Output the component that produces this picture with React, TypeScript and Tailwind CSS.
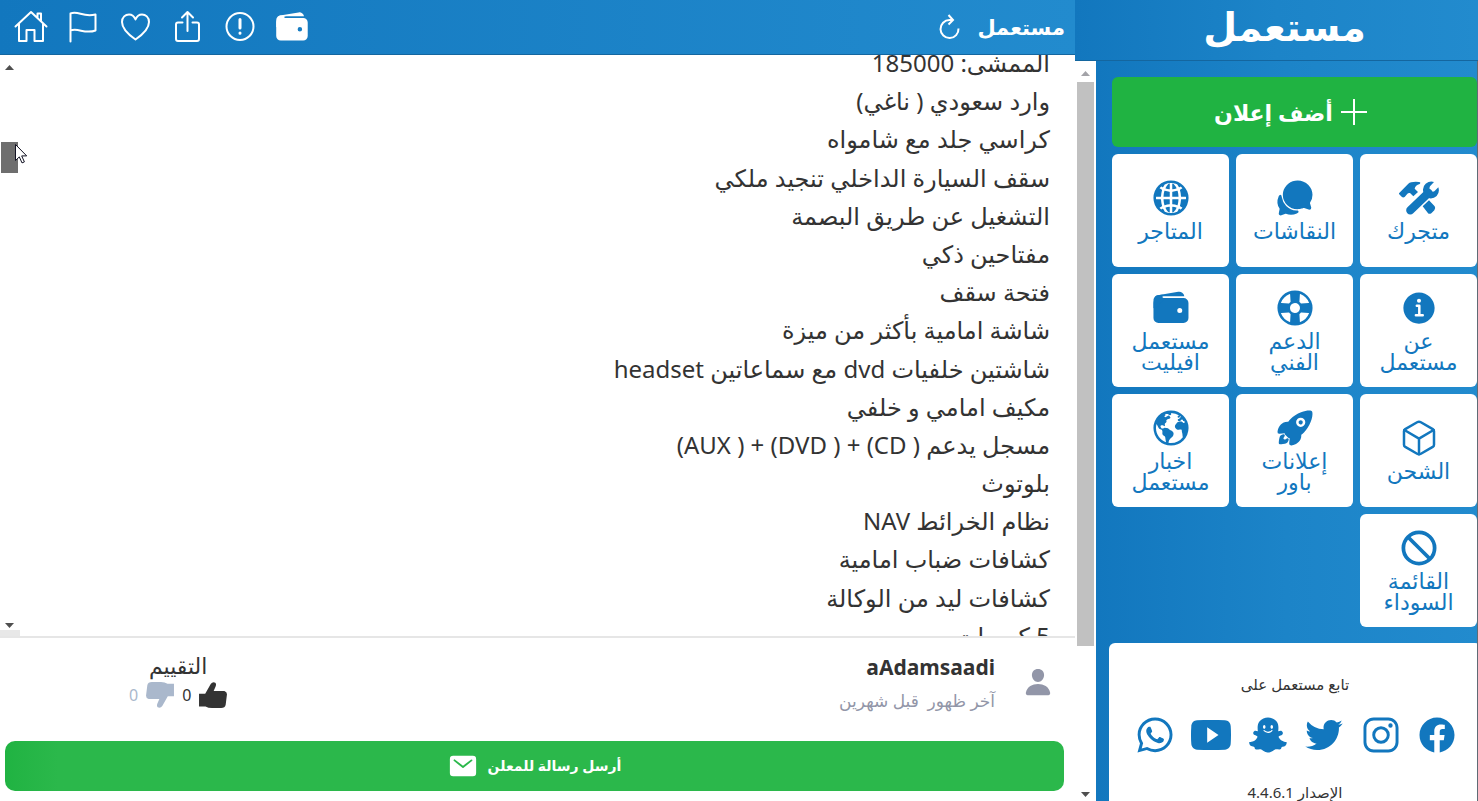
import type { ReactNode } from "react";
import {
  IoBan,
  IoChatbubbles,
  IoCubeOutline,
  IoEarth,
  IoGlobe,
  IoHelpBuoy,
  IoInformationCircle,
  IoLogoFacebook,
  IoLogoInstagram,
  IoLogoSnapchat,
  IoLogoTwitter,
  IoLogoWhatsapp,
  IoLogoYoutube,
  IoMail,
  IoPerson,
  IoRocket,
  IoWallet,
} from "react-icons/io5";

const details = [
  "الممشى: 185000",
  "وارد سعودي ( ناغي)",
  "كراسي جلد مع شامواه",
  "سقف السيارة الداخلي تنجيد ملكي",
  "التشغيل عن طريق البصمة",
  "مفتاحين ذكي",
  "فتحة سقف",
  "شاشة امامية بأكثر من ميزة",
  "شاشتين خلفيات dvd مع سماعاتين headset",
  "مكيف امامي و خلفي",
  "مسجل يدعم ( CD) + ( DVD) + ( AUX)",
  "بلوتوث",
  "نظام الخرائط NAV",
  "كشافات ضباب امامية",
  "كشافات ليد من الوكالة",
  "5 كميرات",
];

const ToolsIcon = () => (
  <svg width="40" height="40" viewBox="0 0 120 120" fill="currentColor">
    <path d="M0 46 28 17Q36 10 60 12 67 13 62 18 49 21 47 32L57 42 43 55 33 45Q27 44 24 49L17 57Q12 60 8 56L0 48Z" />
    <path d="M71 85 90 67 107 85Q111 91 106 97L97 106Q90 110 86 104Z" />
    <path
      d="M34 97 88 45"
      fill="none"
      stroke="currentColor"
      strokeWidth="25"
      strokeLinecap="round"
    />
    <path d="M105 12Q92 8 80 17 69 27 73 42L91 61Q104 63 113 54 123 43 118 28L106 40Q99 43 93 36 90 31 93 25Z" />
  </svg>
);

const tiles = [
  { lines: ["متجرك"], icon: <ToolsIcon /> },
  { lines: ["النقاشات"], icon: <IoChatbubbles size={40} /> },
  { lines: ["المتاجر"], icon: <IoGlobe size={40} /> },
  { lines: ["عن", "مستعمل"], icon: <IoInformationCircle size={40} /> },
  { lines: ["الدعم", "الفني"], icon: <IoHelpBuoy size={40} /> },
  { lines: ["مستعمل", "افيليت"], icon: <IoWallet size={40} /> },
  { lines: ["الشحن"], icon: <IoCubeOutline size={40} /> },
  { lines: ["إعلانات", "باور"], icon: <IoRocket size={40} /> },
  { lines: ["اخبار", "مستعمل"], icon: <IoEarth size={40} /> },
  { lines: ["القائمة", "السوداء"], icon: <IoBan size={40} /> },
];

const socials = [
  { name: "Facebook", icon: <IoLogoFacebook size={40} /> },
  { name: "Instagram", icon: <IoLogoInstagram size={40} /> },
  { name: "Twitter", icon: <IoLogoTwitter size={40} /> },
  { name: "Snapchat", icon: <IoLogoSnapchat size={40} /> },
  { name: "YouTube", icon: <IoLogoYoutube size={40} /> },
  { name: "WhatsApp", icon: <IoLogoWhatsapp size={40} /> },
];

const LineIcon = ({ children }: { children: ReactNode }) => (
  <svg
    width="36"
    height="36"
    viewBox="0 0 36 36"
    fill="none"
    stroke="currentColor"
    strokeWidth="2"
    strokeLinecap="round"
    strokeLinejoin="round"
  >
    {children}
  </svg>
);

const toolbar = [
  {
    name: "الرئيسية",
    icon: (
      <LineIcon>
        <path d="M1.500 17.500 17 3l15.500 14.500M5 15v17h7.500V21h8v11H29V15M23.500 8.500V4.500H27V12" />
      </LineIcon>
    ),
  },
  {
    name: "إبلاغ",
    icon: (
      <LineIcon>
        <path d="M4.500 32.500V4.500c8-3 12 4 25 1v16c-11 4-17-3-25 0" />
      </LineIcon>
    ),
  },
  {
    name: "المفضلة",
    icon: (
      <LineIcon>
        <path d="M17.500 30.500C9.500 25 4 19.500 4 13 4 8 7.500 5.500 11 5.500c3 0 5.300 2 6.500 5 1.200-3 3.500-5 6.500-5 3.500 0 7 2.500 7 7.500 0 6.500-5.500 12-13.500 17.500Z" />
      </LineIcon>
    ),
  },
  {
    name: "مشاركة",
    icon: (
      <LineIcon>
        <path d="M12.500 13.500H8a2 2 0 0 0-2 2V30a2 2 0 0 0 2 2h19a2 2 0 0 0 2-2V15.500a2 2 0 0 0-2-2H22.500M17.500 22V3M12 8.500 17.500 3l5.500 5.500" />
      </LineIcon>
    ),
  },
  {
    name: "تنبيه",
    icon: (
      <LineIcon>
        <circle cx="18" cy="17.500" r="13.500" />
        <path d="M18 10.500v8.500M18 24v.2" strokeWidth="3" />
      </LineIcon>
    ),
  },
  { name: "المحفظة", icon: <IoWallet size={36} /> },
];

const TopBar = () => (
  <header
    dir="ltr"
    className="flex h-[55px] shrink-0 items-center justify-between border-b border-[#14669f] bg-linear-to-r from-[#1277be] to-[#228bce] pr-2.5 pl-3.5 text-white"
  >
    <nav className="flex gap-4">
      {toolbar.map(({ name, icon }) => (
        <button key={name} type="button" aria-label={name}>
          {icon}
        </button>
      ))}
    </nav>
    <div className="flex items-center gap-4">
      <button type="button" aria-label="تحديث">
        <svg
          width="24"
          height="26"
          viewBox="0 0 24 26"
          fill="none"
          stroke="currentColor"
          strokeWidth="2"
        >
          <path d="M21.500 14.500A9 9 0 1 1 12.500 6H16M11.500 1l4.500 5-4.500 4.500" />
        </svg>
      </button>
      <a href="#" className="text-[21px] leading-8 font-bold">
        مستعمل
      </a>
    </div>
  </header>
);

const Arrow = ({ down = false, muted = false }) => (
  <svg
    width="9"
    height="5"
    viewBox="0 0 9 5"
    className={`${down ? "rotate-180" : ""} ${muted ? "text-[#a3a3a8]" : "text-[#4f4f4f]"}`}
  >
    <path d="M0 5 4.500 0 9 5Z" fill="currentColor" />
  </svg>
);

const Details = () => (
  <section className="relative min-h-0 flex-1 overflow-hidden">
    <div className="-mt-[11px] flex h-[611px] flex-col justify-between px-[25px] text-[24px] leading-[38px]">
      {details.map((line) => (
        <p key={line}>{line}</p>
      ))}
    </div>
    <div className="absolute inset-y-0 left-0 flex w-[18px] flex-col items-center justify-between pt-2.5 pb-2">
      <Arrow />
      <Arrow down />
    </div>
    <div className="absolute top-[87px] left-px h-[31px] w-[17px] bg-[#6e6e6e]"></div>
    <div className="absolute bottom-0 left-0 h-1.5 w-5 bg-[#e8e8e8]"></div>
    <svg
      width="13"
      height="20"
      viewBox="0 0 13 20"
      className="absolute top-[89px] left-[15px]"
    >
      <path
        d="M.5.500v16l3.800-3.600 2.700 6 2.400-1-2.700-6h5Z"
        fill="#fff"
        stroke="#111122"
      />
    </svg>
  </section>
);

const Thumb = ({ down = false }) => (
  <svg
    width="28"
    height="26"
    viewBox="0 0 86 80"
    fill="currentColor"
    className={down ? "rotate-180" : ""}
  >
    <path d="M0 36H19L36 6Q41-1 50 2 54 6 51 14L45 28H78Q86 30 86 38L82 70Q80 80 68 80H40Q28 80 20 75H0Z" />
  </svg>
);

const Seller = () => (
  <footer className="shrink-0 border-t-2 border-[#e6e6e6] pb-2.5">
    <div className="flex justify-between pt-[11px] pr-[22px]">
      <div className="flex gap-7">
        <IoPerson size={30} className="mt-[18px] text-[#9296a8]" />
        <div>
          <h2
            dir="ltr"
            className="text-right text-[21px] leading-9 font-bold"
          >
            aAdamsaadi
          </h2>
          <p className="text-[17px] leading-8 text-[#9296a8]">
            آخر ظهور&nbsp; قبل شهرين
          </p>
        </div>
      </div>
      <div className="ml-[129px] flex flex-col items-center pt-1">
        <h3 className="text-[22px] leading-6">التقييم</h3>
        <div className="flex items-center gap-2 pt-1 text-base leading-7">
          <button
            type="button"
            aria-label="أعجبني"
            className="flex items-center gap-2"
          >
            <Thumb />
            <span>0</span>
          </button>
          <button
            type="button"
            aria-label="لم يعجبني"
            className="flex items-center gap-2 text-[#aab8cc]"
          >
            <Thumb down />
            <span>0</span>
          </button>
        </div>
      </div>
    </div>
    <div className="mt-6 pr-[11px] pl-[5px]">
      <button
        type="button"
        className="flex h-[50px] w-full items-center justify-center gap-2.5 rounded-[10px] bg-linear-to-r from-[#20b342] to-[#2bb84b] to-5% text-sm font-bold text-white"
      >
        أرسل رسالة للمعلن
        <IoMail size={30} />
      </button>
    </div>
  </footer>
);

const Sidebar = () => (
  <aside className="min-w-0 flex-1 overflow-hidden border-r border-[#5f6b75] bg-linear-to-r from-[#1277be] via-[#1c84c8] via-50% to-[#228bce] pt-4 pl-4">
    <button
      type="button"
      className="flex h-[70px] w-full items-center justify-center gap-2 rounded-md bg-[#20b342] pr-2 text-[22px] font-bold text-white"
    >
      <svg
        width="26"
        height="26"
        viewBox="0 0 26 26"
        stroke="currentColor"
        strokeWidth="2"
      >
        <path d="M13 0v26M0 13h26" />
      </svg>
      أضف إعلان
    </button>
    <nav className="mt-[7px] grid grid-cols-3 gap-[7px]">
      {tiles.map(({ lines, icon }) => (
        <a
          key={lines.join(" ")}
          href="#"
          className="flex h-[113px] flex-col items-center justify-center gap-0.5 rounded-md bg-white pb-0.5 text-[22px] leading-[21px] text-[#1277be]"
        >
          {icon}
          <span className="text-center">
            {lines.map((line) => (
              <span key={line} className="block">
                {line}
              </span>
            ))}
          </span>
        </a>
      ))}
    </nav>
    <section className="mt-4 -mr-1 -ml-[3px] h-60 rounded-md bg-white pt-7 text-center text-[15px] leading-[26px]">
      <h2>تابع مستعمل على</h2>
      <div className="flex h-[76px] items-center justify-between pr-6 pl-[26px] text-[#1277be]">
        {socials.map(({ name, icon }) => (
          <a key={name} href="#" aria-label={name}>
            {icon}
          </a>
        ))}
      </div>
      <p className="pt-1.5">الإصدار 4.4.6.1</p>
    </section>
  </aside>
);

const App = () => (
  <div
    dir="ltr"
    className="flex h-screen overflow-hidden bg-white font-['Noto_Sans','DejaVu_Sans',sans-serif] text-[#333333]"
  >
    <main dir="rtl" className="flex min-w-0 flex-1 flex-col">
      <TopBar />
      <Details />
      <Seller />
    </main>
    <div className="flex w-[403px] shrink-0 flex-col">
      <header className="flex h-[61px] shrink-0 items-center justify-center border-b border-[#14669f] bg-linear-to-r from-[#1277be] via-[#1c84c8] via-50% to-[#228bce] pb-2 pl-4 text-white">
        <a href="#" className="text-[39px] leading-[52px] font-bold">
          مستعمل
        </a>
      </header>
      <div className="flex min-h-0 flex-1">
        <div className="flex w-[21px] shrink-0 flex-col items-center pt-2.5 pb-1">
          <Arrow muted />
          <div className="mt-1.5 h-[564px] w-[17px] bg-[#c1c1c1]"></div>
          <div className="mt-auto">
            <Arrow down />
          </div>
        </div>
        <div dir="rtl" className="flex min-w-0 flex-1">
          <Sidebar />
        </div>
      </div>
    </div>
  </div>
);

export default App;
